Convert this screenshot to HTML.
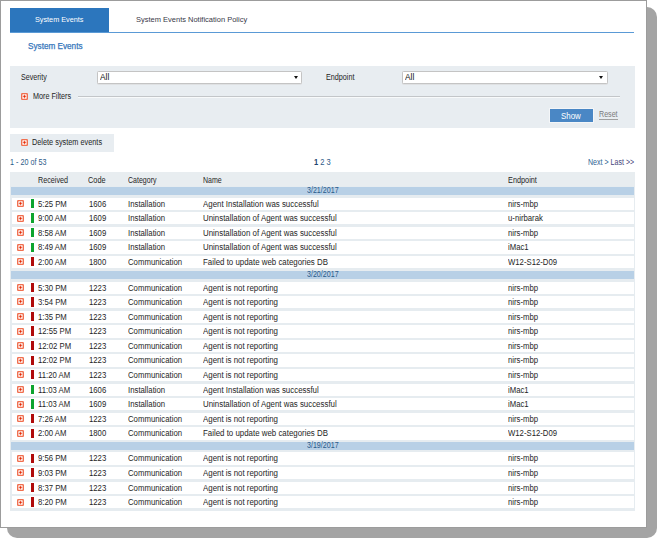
<!DOCTYPE html>
<html><head><meta charset="utf-8">
<style>
*{margin:0;padding:0;box-sizing:border-box}
html,body{width:665px;height:546px;background:#fff;overflow:hidden}
body{position:relative;font-family:"Liberation Sans",sans-serif;color:#222;}
.t{position:absolute;white-space:nowrap;line-height:20px;}
.shadow{position:absolute;left:7px;top:7px;width:650px;height:531px;background:#a4a4a4;border-radius:10px}
.panel{position:absolute;left:0;top:0;width:647px;height:528px;background:#fff;border:1px solid #9c9c9c}
.tab1{position:absolute;left:10px;top:8px;width:99px;height:24px;background:#2c76bd}
.tabline{position:absolute;left:10px;top:32px;width:624px;height:1px;background:#5a9ad6}
.filt{position:absolute;left:10px;top:65.5px;width:625px;height:62.1px;background:#e8edf1}
.sel{position:absolute;height:13.2px;background:#fff;border:1px solid #c4c4c4;border-radius:1.5px;box-shadow:0 0.6px 0 #d6d6d6}
.sel b{position:absolute;right:3.5px;top:3.8px;width:0;height:0;border-left:2.4px solid transparent;border-right:2.4px solid transparent;border-top:3.8px solid #111}
.ic{position:absolute;width:7px;height:7px;display:block}
.sep{position:absolute;left:78px;top:96.3px;width:542px;height:1px;background:#c3c6c9;box-shadow:0 1px 0 #f8fafb}
.show{position:absolute;left:549.5px;top:108.8px;width:43.5px;height:13px;background:#4a87c5;box-shadow:0 0 0 1px #f4f6f8}
.uline{position:absolute;left:599.2px;top:118.6px;width:18.6px;height:0.8px;background:#a0a0a0}
.del{position:absolute;left:10px;top:133.7px;width:103.8px;height:17.9px;background:#e8edf1}
.thead{position:absolute;left:10px;top:172px;width:625px;height:15px;background:#e8edf0}
.tbl{position:absolute;left:10.3px;top:186px;width:624.7px;height:324.7px;background:#e6ecf0}
.drow{position:absolute;left:11px;width:623px;height:8.1px;background:#b8d0e6}
.row{position:absolute;left:11.7px;width:622.3px;height:12.3px;background:#fff}
.bar{position:absolute;left:30.8px;width:2.8px;height:9.3px}
.bar.g{background:#0ca42e}
.bar.r{background:#b00a0a}
</style></head><body>
<div class="shadow"></div>
<div class="panel"></div>
<div class="tab1"></div>
<div class="tabline"></div>
<div class="filt"></div>
<div class="sel" style="left:97px;top:70.9px;width:205px"><b></b></div>
<div class="sel" style="left:402.3px;top:70.9px;width:205.5px"><b></b></div>
<svg class="ic" style="left:21px;top:93px" viewBox="0 0 14 14"><rect x="0" y="0" width="14" height="14" rx="2.5" fill="#f07050"/><rect x="2.7" y="2.6" width="8.6" height="8.8" rx="1" fill="#fff"/><rect x="6.2" y="2" width="1.6" height="10" fill="#f8b4a2"/><rect x="2" y="6.2" width="10" height="1.6" fill="#f8b4a2"/><circle cx="7" cy="7" r="2.3" fill="#e42805"/></svg>
<div class="sep"></div>
<div class="show"></div>
<div class="uline"></div>
<div class="del"></div>
<svg class="ic" style="left:21px;top:139px" viewBox="0 0 14 14"><rect x="0" y="0" width="14" height="14" rx="2.5" fill="#f07050"/><rect x="2.7" y="2.6" width="8.6" height="8.8" rx="1" fill="#fff"/><rect x="6.2" y="2" width="1.6" height="10" fill="#f8b4a2"/><rect x="2" y="6.2" width="10" height="1.6" fill="#f8b4a2"/><circle cx="7" cy="7" r="2.3" fill="#e42805"/></svg>
<div class="thead"></div>
<div class="tbl"></div>
<div class="t tb" style="left:35.48px;top:10.13px;font-size:8.0px;color:#fff;transform:scaleX(0.9067);transform-origin:0 0;">System Events</div>
<div class="t tb" style="left:135.77px;top:10.23px;font-size:8.0px;color:#383848;transform:scaleX(0.9363);transform-origin:0 0;">System Events Notification Policy</div>
<div class="t " style="left:28.34px;top:35.62px;font-size:8.6px;color:#3576bb;transform:scaleX(0.9511);transform-origin:0 0;-webkit-text-stroke:0.25px #3576bb;">System Events</div>
<div class="t " style="left:20.59px;top:67.29px;font-size:8.4px;color:#1e1e1e;transform:scaleX(0.8513);transform-origin:0 0;">Severity</div>
<div class="t " style="left:99.78px;top:66.99px;font-size:8.4px;color:#111;transform:scaleX(0.9921);transform-origin:0 0;">All</div>
<div class="t " style="left:326.21px;top:67.09px;font-size:8.4px;color:#1e1e1e;transform:scaleX(0.8605);transform-origin:0 0;">Endpoint</div>
<div class="t " style="left:404.98px;top:66.99px;font-size:8.4px;color:#111;transform:scaleX(0.9921);transform-origin:0 0;">All</div>
<div class="t " style="left:32.91px;top:85.79px;font-size:8.4px;color:#1e1e1e;transform:scaleX(0.8606);transform-origin:0 0;">More Filters</div>
<div class="t " style="left:560.85px;top:105.92px;font-size:8.6px;color:#fff;transform:scaleX(0.9210);transform-origin:0 0;">Show</div>
<div class="t " style="left:598.62px;top:105.36px;font-size:8.2px;color:#7a7a7a;transform:scaleX(0.8697);transform-origin:0 0;">Reset</div>
<div class="t " style="left:32.30px;top:132.49px;font-size:8.4px;color:#1e1e1e;transform:scaleX(0.8750);transform-origin:0 0;">Delete system events</div>
<div class="t " style="left:10.20px;top:151.59px;font-size:8.4px;color:#2e5b88;transform:scaleX(0.8600);transform-origin:0 0;">1 - 20 of 53</div>
<div class="t " style="left:37.71px;top:170.19px;font-size:8.4px;color:#1e1e1e;transform:scaleX(0.8613);transform-origin:0 0;">Received</div>
<div class="t " style="left:88.43px;top:170.19px;font-size:8.4px;color:#1e1e1e;transform:scaleX(0.8763);transform-origin:0 0;">Code</div>
<div class="t " style="left:127.65px;top:170.19px;font-size:8.4px;color:#1e1e1e;transform:scaleX(0.8380);transform-origin:0 0;">Category</div>
<div class="t " style="left:202.62px;top:170.19px;font-size:8.4px;color:#1e1e1e;transform:scaleX(0.8383);transform-origin:0 0;">Name</div>
<div class="t " style="left:507.80px;top:170.19px;font-size:8.4px;color:#1e1e1e;transform:scaleX(0.8728);transform-origin:0 0;">Endpoint</div>
<div class="t" style="left:314.2px;top:151.69px;font-size:8.4px;color:#2e5b88;transform:scaleX(0.9);transform-origin:0 0"><b style="color:#1f4470">1</b> 2 3</div>
<div class="t" style="left:587.5px;top:151.69px;font-size:8.4px;color:#2e5f92;transform:scaleX(0.845);transform-origin:0 0">Next &gt; <span style="color:#45457a">Last &gt;&gt;</span></div>
<div class="drow" style="top:187.00px"></div>
<div class="t " style="left:306.53px;top:180.86px;font-size:8.2px;color:#2a5a8a;transform:scaleX(0.8671);transform-origin:0 0;">3/21/2017</div>
<div class="row" style="top:197.60px"></div>
<svg class="ic" style="left:17px;top:200px" viewBox="0 0 14 14"><rect x="0" y="0" width="14" height="14" rx="2.5" fill="#f07050"/><rect x="2.7" y="2.6" width="8.6" height="8.8" rx="1" fill="#fff"/><rect x="6.2" y="2" width="1.6" height="10" fill="#f8b4a2"/><rect x="2" y="6.2" width="10" height="1.6" fill="#f8b4a2"/><circle cx="7" cy="7" r="2.3" fill="#e42805"/></svg>
<i class="bar g" style="top:198.80px"></i>
<div class="t" style="left:37.89px;top:193.65px;font-size:8.5px;color:#1e1e1e;transform:scaleX(0.91);transform-origin:0 0">5:25 PM</div>
<div class="t" style="left:88.91px;top:193.65px;font-size:8.5px;color:#1e1e1e;transform:scaleX(0.91);transform-origin:0 0">1606</div>
<div class="t" style="left:127.68px;top:193.65px;font-size:8.5px;color:#1e1e1e;transform:scaleX(0.915);transform-origin:0 0">Installation</div>
<div class="t" style="left:203.28px;top:193.65px;font-size:8.5px;color:#1e1e1e;transform:scaleX(0.928);transform-origin:0 0">Agent Installation was successful</div>
<div class="t" style="left:507.99px;top:193.65px;font-size:8.5px;color:#1e1e1e;transform:scaleX(0.91);transform-origin:0 0">nirs-mbp</div>
<div class="row" style="top:212.18px"></div>
<svg class="ic" style="left:17px;top:215px" viewBox="0 0 14 14"><rect x="0" y="0" width="14" height="14" rx="2.5" fill="#f07050"/><rect x="2.7" y="2.6" width="8.6" height="8.8" rx="1" fill="#fff"/><rect x="6.2" y="2" width="1.6" height="10" fill="#f8b4a2"/><rect x="2" y="6.2" width="10" height="1.6" fill="#f8b4a2"/><circle cx="7" cy="7" r="2.3" fill="#e42805"/></svg>
<i class="bar g" style="top:213.38px"></i>
<div class="t" style="left:37.84px;top:208.23px;font-size:8.5px;color:#1e1e1e;transform:scaleX(0.91);transform-origin:0 0">9:00 AM</div>
<div class="t" style="left:88.91px;top:208.23px;font-size:8.5px;color:#1e1e1e;transform:scaleX(0.91);transform-origin:0 0">1609</div>
<div class="t" style="left:127.68px;top:208.23px;font-size:8.5px;color:#1e1e1e;transform:scaleX(0.915);transform-origin:0 0">Installation</div>
<div class="t" style="left:202.70px;top:208.23px;font-size:8.5px;color:#1e1e1e;transform:scaleX(0.928);transform-origin:0 0">Uninstallation of Agent was successful</div>
<div class="t" style="left:508.00px;top:208.23px;font-size:8.5px;color:#1e1e1e;transform:scaleX(0.91);transform-origin:0 0">u-nirbarak</div>
<div class="row" style="top:226.76px"></div>
<svg class="ic" style="left:17px;top:229px" viewBox="0 0 14 14"><rect x="0" y="0" width="14" height="14" rx="2.5" fill="#f07050"/><rect x="2.7" y="2.6" width="8.6" height="8.8" rx="1" fill="#fff"/><rect x="6.2" y="2" width="1.6" height="10" fill="#f8b4a2"/><rect x="2" y="6.2" width="10" height="1.6" fill="#f8b4a2"/><circle cx="7" cy="7" r="2.3" fill="#e42805"/></svg>
<i class="bar g" style="top:227.96px"></i>
<div class="t" style="left:37.88px;top:222.81px;font-size:8.5px;color:#1e1e1e;transform:scaleX(0.91);transform-origin:0 0">8:58 AM</div>
<div class="t" style="left:88.91px;top:222.81px;font-size:8.5px;color:#1e1e1e;transform:scaleX(0.91);transform-origin:0 0">1609</div>
<div class="t" style="left:127.68px;top:222.81px;font-size:8.5px;color:#1e1e1e;transform:scaleX(0.915);transform-origin:0 0">Installation</div>
<div class="t" style="left:202.70px;top:222.81px;font-size:8.5px;color:#1e1e1e;transform:scaleX(0.928);transform-origin:0 0">Uninstallation of Agent was successful</div>
<div class="t" style="left:507.99px;top:222.81px;font-size:8.5px;color:#1e1e1e;transform:scaleX(0.91);transform-origin:0 0">nirs-mbp</div>
<div class="row" style="top:241.34px"></div>
<svg class="ic" style="left:17px;top:244px" viewBox="0 0 14 14"><rect x="0" y="0" width="14" height="14" rx="2.5" fill="#f07050"/><rect x="2.7" y="2.6" width="8.6" height="8.8" rx="1" fill="#fff"/><rect x="6.2" y="2" width="1.6" height="10" fill="#f8b4a2"/><rect x="2" y="6.2" width="10" height="1.6" fill="#f8b4a2"/><circle cx="7" cy="7" r="2.3" fill="#e42805"/></svg>
<i class="bar g" style="top:242.54px"></i>
<div class="t" style="left:37.88px;top:237.39px;font-size:8.5px;color:#1e1e1e;transform:scaleX(0.91);transform-origin:0 0">8:49 AM</div>
<div class="t" style="left:88.91px;top:237.39px;font-size:8.5px;color:#1e1e1e;transform:scaleX(0.91);transform-origin:0 0">1609</div>
<div class="t" style="left:127.68px;top:237.39px;font-size:8.5px;color:#1e1e1e;transform:scaleX(0.915);transform-origin:0 0">Installation</div>
<div class="t" style="left:202.70px;top:237.39px;font-size:8.5px;color:#1e1e1e;transform:scaleX(0.928);transform-origin:0 0">Uninstallation of Agent was successful</div>
<div class="t" style="left:507.99px;top:237.39px;font-size:8.5px;color:#1e1e1e;transform:scaleX(0.91);transform-origin:0 0">iMac1</div>
<div class="row" style="top:255.92px"></div>
<svg class="ic" style="left:17px;top:258px" viewBox="0 0 14 14"><rect x="0" y="0" width="14" height="14" rx="2.5" fill="#f07050"/><rect x="2.7" y="2.6" width="8.6" height="8.8" rx="1" fill="#fff"/><rect x="6.2" y="2" width="1.6" height="10" fill="#f8b4a2"/><rect x="2" y="6.2" width="10" height="1.6" fill="#f8b4a2"/><circle cx="7" cy="7" r="2.3" fill="#e42805"/></svg>
<i class="bar r" style="top:257.12px"></i>
<div class="t" style="left:37.81px;top:251.97px;font-size:8.5px;color:#1e1e1e;transform:scaleX(0.91);transform-origin:0 0">2:00 AM</div>
<div class="t" style="left:88.91px;top:251.97px;font-size:8.5px;color:#1e1e1e;transform:scaleX(0.91);transform-origin:0 0">1800</div>
<div class="t" style="left:128.01px;top:251.97px;font-size:8.5px;color:#1e1e1e;transform:scaleX(0.915);transform-origin:0 0">Communication</div>
<div class="t" style="left:202.65px;top:251.97px;font-size:8.5px;color:#1e1e1e;transform:scaleX(0.928);transform-origin:0 0">Failed to update web categories DB</div>
<div class="t" style="left:508.47px;top:251.97px;font-size:8.5px;color:#1e1e1e;transform:scaleX(0.91);transform-origin:0 0">W12-S12-D09</div>
<div class="drow" style="top:270.80px"></div>
<div class="t " style="left:306.53px;top:264.66px;font-size:8.2px;color:#2a5a8a;transform:scaleX(0.8671);transform-origin:0 0;">3/20/2017</div>
<div class="row" style="top:281.50px"></div>
<svg class="ic" style="left:17px;top:284px" viewBox="0 0 14 14"><rect x="0" y="0" width="14" height="14" rx="2.5" fill="#f07050"/><rect x="2.7" y="2.6" width="8.6" height="8.8" rx="1" fill="#fff"/><rect x="6.2" y="2" width="1.6" height="10" fill="#f8b4a2"/><rect x="2" y="6.2" width="10" height="1.6" fill="#f8b4a2"/><circle cx="7" cy="7" r="2.3" fill="#e42805"/></svg>
<i class="bar r" style="top:282.70px"></i>
<div class="t" style="left:37.89px;top:277.55px;font-size:8.5px;color:#1e1e1e;transform:scaleX(0.91);transform-origin:0 0">5:30 PM</div>
<div class="t" style="left:88.91px;top:277.55px;font-size:8.5px;color:#1e1e1e;transform:scaleX(0.91);transform-origin:0 0">1223</div>
<div class="t" style="left:128.01px;top:277.55px;font-size:8.5px;color:#1e1e1e;transform:scaleX(0.915);transform-origin:0 0">Communication</div>
<div class="t" style="left:203.28px;top:277.55px;font-size:8.5px;color:#1e1e1e;transform:scaleX(0.928);transform-origin:0 0">Agent is not reporting</div>
<div class="t" style="left:507.99px;top:277.55px;font-size:8.5px;color:#1e1e1e;transform:scaleX(0.91);transform-origin:0 0">nirs-mbp</div>
<div class="row" style="top:296.08px"></div>
<svg class="ic" style="left:17px;top:298px" viewBox="0 0 14 14"><rect x="0" y="0" width="14" height="14" rx="2.5" fill="#f07050"/><rect x="2.7" y="2.6" width="8.6" height="8.8" rx="1" fill="#fff"/><rect x="6.2" y="2" width="1.6" height="10" fill="#f8b4a2"/><rect x="2" y="6.2" width="10" height="1.6" fill="#f8b4a2"/><circle cx="7" cy="7" r="2.3" fill="#e42805"/></svg>
<i class="bar r" style="top:297.28px"></i>
<div class="t" style="left:37.91px;top:292.13px;font-size:8.5px;color:#1e1e1e;transform:scaleX(0.91);transform-origin:0 0">3:54 PM</div>
<div class="t" style="left:88.91px;top:292.13px;font-size:8.5px;color:#1e1e1e;transform:scaleX(0.91);transform-origin:0 0">1223</div>
<div class="t" style="left:128.01px;top:292.13px;font-size:8.5px;color:#1e1e1e;transform:scaleX(0.915);transform-origin:0 0">Communication</div>
<div class="t" style="left:203.28px;top:292.13px;font-size:8.5px;color:#1e1e1e;transform:scaleX(0.928);transform-origin:0 0">Agent is not reporting</div>
<div class="t" style="left:507.99px;top:292.13px;font-size:8.5px;color:#1e1e1e;transform:scaleX(0.91);transform-origin:0 0">nirs-mbp</div>
<div class="row" style="top:310.66px"></div>
<svg class="ic" style="left:17px;top:313px" viewBox="0 0 14 14"><rect x="0" y="0" width="14" height="14" rx="2.5" fill="#f07050"/><rect x="2.7" y="2.6" width="8.6" height="8.8" rx="1" fill="#fff"/><rect x="6.2" y="2" width="1.6" height="10" fill="#f8b4a2"/><rect x="2" y="6.2" width="10" height="1.6" fill="#f8b4a2"/><circle cx="7" cy="7" r="2.3" fill="#e42805"/></svg>
<i class="bar r" style="top:311.86px"></i>
<div class="t" style="left:37.61px;top:306.71px;font-size:8.5px;color:#1e1e1e;transform:scaleX(0.91);transform-origin:0 0">1:35 PM</div>
<div class="t" style="left:88.91px;top:306.71px;font-size:8.5px;color:#1e1e1e;transform:scaleX(0.91);transform-origin:0 0">1223</div>
<div class="t" style="left:128.01px;top:306.71px;font-size:8.5px;color:#1e1e1e;transform:scaleX(0.915);transform-origin:0 0">Communication</div>
<div class="t" style="left:203.28px;top:306.71px;font-size:8.5px;color:#1e1e1e;transform:scaleX(0.928);transform-origin:0 0">Agent is not reporting</div>
<div class="t" style="left:507.99px;top:306.71px;font-size:8.5px;color:#1e1e1e;transform:scaleX(0.91);transform-origin:0 0">nirs-mbp</div>
<div class="row" style="top:325.24px"></div>
<svg class="ic" style="left:17px;top:328px" viewBox="0 0 14 14"><rect x="0" y="0" width="14" height="14" rx="2.5" fill="#f07050"/><rect x="2.7" y="2.6" width="8.6" height="8.8" rx="1" fill="#fff"/><rect x="6.2" y="2" width="1.6" height="10" fill="#f8b4a2"/><rect x="2" y="6.2" width="10" height="1.6" fill="#f8b4a2"/><circle cx="7" cy="7" r="2.3" fill="#e42805"/></svg>
<i class="bar r" style="top:326.44px"></i>
<div class="t" style="left:37.61px;top:321.29px;font-size:8.5px;color:#1e1e1e;transform:scaleX(0.91);transform-origin:0 0">12:55 PM</div>
<div class="t" style="left:88.91px;top:321.29px;font-size:8.5px;color:#1e1e1e;transform:scaleX(0.91);transform-origin:0 0">1223</div>
<div class="t" style="left:128.01px;top:321.29px;font-size:8.5px;color:#1e1e1e;transform:scaleX(0.915);transform-origin:0 0">Communication</div>
<div class="t" style="left:203.28px;top:321.29px;font-size:8.5px;color:#1e1e1e;transform:scaleX(0.928);transform-origin:0 0">Agent is not reporting</div>
<div class="t" style="left:507.99px;top:321.29px;font-size:8.5px;color:#1e1e1e;transform:scaleX(0.91);transform-origin:0 0">nirs-mbp</div>
<div class="row" style="top:339.82px"></div>
<svg class="ic" style="left:17px;top:342px" viewBox="0 0 14 14"><rect x="0" y="0" width="14" height="14" rx="2.5" fill="#f07050"/><rect x="2.7" y="2.6" width="8.6" height="8.8" rx="1" fill="#fff"/><rect x="6.2" y="2" width="1.6" height="10" fill="#f8b4a2"/><rect x="2" y="6.2" width="10" height="1.6" fill="#f8b4a2"/><circle cx="7" cy="7" r="2.3" fill="#e42805"/></svg>
<i class="bar r" style="top:341.02px"></i>
<div class="t" style="left:37.61px;top:335.87px;font-size:8.5px;color:#1e1e1e;transform:scaleX(0.91);transform-origin:0 0">12:02 PM</div>
<div class="t" style="left:88.91px;top:335.87px;font-size:8.5px;color:#1e1e1e;transform:scaleX(0.91);transform-origin:0 0">1223</div>
<div class="t" style="left:128.01px;top:335.87px;font-size:8.5px;color:#1e1e1e;transform:scaleX(0.915);transform-origin:0 0">Communication</div>
<div class="t" style="left:203.28px;top:335.87px;font-size:8.5px;color:#1e1e1e;transform:scaleX(0.928);transform-origin:0 0">Agent is not reporting</div>
<div class="t" style="left:507.99px;top:335.87px;font-size:8.5px;color:#1e1e1e;transform:scaleX(0.91);transform-origin:0 0">nirs-mbp</div>
<div class="row" style="top:354.40px"></div>
<svg class="ic" style="left:17px;top:357px" viewBox="0 0 14 14"><rect x="0" y="0" width="14" height="14" rx="2.5" fill="#f07050"/><rect x="2.7" y="2.6" width="8.6" height="8.8" rx="1" fill="#fff"/><rect x="6.2" y="2" width="1.6" height="10" fill="#f8b4a2"/><rect x="2" y="6.2" width="10" height="1.6" fill="#f8b4a2"/><circle cx="7" cy="7" r="2.3" fill="#e42805"/></svg>
<i class="bar r" style="top:355.60px"></i>
<div class="t" style="left:37.61px;top:350.45px;font-size:8.5px;color:#1e1e1e;transform:scaleX(0.91);transform-origin:0 0">12:02 PM</div>
<div class="t" style="left:88.91px;top:350.45px;font-size:8.5px;color:#1e1e1e;transform:scaleX(0.91);transform-origin:0 0">1223</div>
<div class="t" style="left:128.01px;top:350.45px;font-size:8.5px;color:#1e1e1e;transform:scaleX(0.915);transform-origin:0 0">Communication</div>
<div class="t" style="left:203.28px;top:350.45px;font-size:8.5px;color:#1e1e1e;transform:scaleX(0.928);transform-origin:0 0">Agent is not reporting</div>
<div class="t" style="left:507.99px;top:350.45px;font-size:8.5px;color:#1e1e1e;transform:scaleX(0.91);transform-origin:0 0">nirs-mbp</div>
<div class="row" style="top:368.98px"></div>
<svg class="ic" style="left:17px;top:371px" viewBox="0 0 14 14"><rect x="0" y="0" width="14" height="14" rx="2.5" fill="#f07050"/><rect x="2.7" y="2.6" width="8.6" height="8.8" rx="1" fill="#fff"/><rect x="6.2" y="2" width="1.6" height="10" fill="#f8b4a2"/><rect x="2" y="6.2" width="10" height="1.6" fill="#f8b4a2"/><circle cx="7" cy="7" r="2.3" fill="#e42805"/></svg>
<i class="bar r" style="top:370.18px"></i>
<div class="t" style="left:37.61px;top:365.03px;font-size:8.5px;color:#1e1e1e;transform:scaleX(0.91);transform-origin:0 0">11:20 AM</div>
<div class="t" style="left:88.91px;top:365.03px;font-size:8.5px;color:#1e1e1e;transform:scaleX(0.91);transform-origin:0 0">1223</div>
<div class="t" style="left:128.01px;top:365.03px;font-size:8.5px;color:#1e1e1e;transform:scaleX(0.915);transform-origin:0 0">Communication</div>
<div class="t" style="left:203.28px;top:365.03px;font-size:8.5px;color:#1e1e1e;transform:scaleX(0.928);transform-origin:0 0">Agent is not reporting</div>
<div class="t" style="left:507.99px;top:365.03px;font-size:8.5px;color:#1e1e1e;transform:scaleX(0.91);transform-origin:0 0">nirs-mbp</div>
<div class="row" style="top:383.56px"></div>
<svg class="ic" style="left:17px;top:386px" viewBox="0 0 14 14"><rect x="0" y="0" width="14" height="14" rx="2.5" fill="#f07050"/><rect x="2.7" y="2.6" width="8.6" height="8.8" rx="1" fill="#fff"/><rect x="6.2" y="2" width="1.6" height="10" fill="#f8b4a2"/><rect x="2" y="6.2" width="10" height="1.6" fill="#f8b4a2"/><circle cx="7" cy="7" r="2.3" fill="#e42805"/></svg>
<i class="bar g" style="top:384.76px"></i>
<div class="t" style="left:37.61px;top:379.61px;font-size:8.5px;color:#1e1e1e;transform:scaleX(0.91);transform-origin:0 0">11:03 AM</div>
<div class="t" style="left:88.91px;top:379.61px;font-size:8.5px;color:#1e1e1e;transform:scaleX(0.91);transform-origin:0 0">1606</div>
<div class="t" style="left:127.68px;top:379.61px;font-size:8.5px;color:#1e1e1e;transform:scaleX(0.915);transform-origin:0 0">Installation</div>
<div class="t" style="left:203.28px;top:379.61px;font-size:8.5px;color:#1e1e1e;transform:scaleX(0.928);transform-origin:0 0">Agent Installation was successful</div>
<div class="t" style="left:507.99px;top:379.61px;font-size:8.5px;color:#1e1e1e;transform:scaleX(0.91);transform-origin:0 0">iMac1</div>
<div class="row" style="top:398.14px"></div>
<svg class="ic" style="left:17px;top:401px" viewBox="0 0 14 14"><rect x="0" y="0" width="14" height="14" rx="2.5" fill="#f07050"/><rect x="2.7" y="2.6" width="8.6" height="8.8" rx="1" fill="#fff"/><rect x="6.2" y="2" width="1.6" height="10" fill="#f8b4a2"/><rect x="2" y="6.2" width="10" height="1.6" fill="#f8b4a2"/><circle cx="7" cy="7" r="2.3" fill="#e42805"/></svg>
<i class="bar g" style="top:399.34px"></i>
<div class="t" style="left:37.61px;top:394.19px;font-size:8.5px;color:#1e1e1e;transform:scaleX(0.91);transform-origin:0 0">11:03 AM</div>
<div class="t" style="left:88.91px;top:394.19px;font-size:8.5px;color:#1e1e1e;transform:scaleX(0.91);transform-origin:0 0">1609</div>
<div class="t" style="left:127.68px;top:394.19px;font-size:8.5px;color:#1e1e1e;transform:scaleX(0.915);transform-origin:0 0">Installation</div>
<div class="t" style="left:202.70px;top:394.19px;font-size:8.5px;color:#1e1e1e;transform:scaleX(0.928);transform-origin:0 0">Uninstallation of Agent was successful</div>
<div class="t" style="left:507.99px;top:394.19px;font-size:8.5px;color:#1e1e1e;transform:scaleX(0.91);transform-origin:0 0">iMac1</div>
<div class="row" style="top:412.72px"></div>
<svg class="ic" style="left:17px;top:415px" viewBox="0 0 14 14"><rect x="0" y="0" width="14" height="14" rx="2.5" fill="#f07050"/><rect x="2.7" y="2.6" width="8.6" height="8.8" rx="1" fill="#fff"/><rect x="6.2" y="2" width="1.6" height="10" fill="#f8b4a2"/><rect x="2" y="6.2" width="10" height="1.6" fill="#f8b4a2"/><circle cx="7" cy="7" r="2.3" fill="#e42805"/></svg>
<i class="bar r" style="top:413.92px"></i>
<div class="t" style="left:37.81px;top:408.77px;font-size:8.5px;color:#1e1e1e;transform:scaleX(0.91);transform-origin:0 0">7:26 AM</div>
<div class="t" style="left:88.91px;top:408.77px;font-size:8.5px;color:#1e1e1e;transform:scaleX(0.91);transform-origin:0 0">1223</div>
<div class="t" style="left:128.01px;top:408.77px;font-size:8.5px;color:#1e1e1e;transform:scaleX(0.915);transform-origin:0 0">Communication</div>
<div class="t" style="left:203.28px;top:408.77px;font-size:8.5px;color:#1e1e1e;transform:scaleX(0.928);transform-origin:0 0">Agent is not reporting</div>
<div class="t" style="left:507.99px;top:408.77px;font-size:8.5px;color:#1e1e1e;transform:scaleX(0.91);transform-origin:0 0">nirs-mbp</div>
<div class="row" style="top:427.30px"></div>
<svg class="ic" style="left:17px;top:430px" viewBox="0 0 14 14"><rect x="0" y="0" width="14" height="14" rx="2.5" fill="#f07050"/><rect x="2.7" y="2.6" width="8.6" height="8.8" rx="1" fill="#fff"/><rect x="6.2" y="2" width="1.6" height="10" fill="#f8b4a2"/><rect x="2" y="6.2" width="10" height="1.6" fill="#f8b4a2"/><circle cx="7" cy="7" r="2.3" fill="#e42805"/></svg>
<i class="bar r" style="top:428.50px"></i>
<div class="t" style="left:37.81px;top:423.35px;font-size:8.5px;color:#1e1e1e;transform:scaleX(0.91);transform-origin:0 0">2:00 AM</div>
<div class="t" style="left:88.91px;top:423.35px;font-size:8.5px;color:#1e1e1e;transform:scaleX(0.91);transform-origin:0 0">1800</div>
<div class="t" style="left:128.01px;top:423.35px;font-size:8.5px;color:#1e1e1e;transform:scaleX(0.915);transform-origin:0 0">Communication</div>
<div class="t" style="left:202.65px;top:423.35px;font-size:8.5px;color:#1e1e1e;transform:scaleX(0.928);transform-origin:0 0">Failed to update web categories DB</div>
<div class="t" style="left:508.47px;top:423.35px;font-size:8.5px;color:#1e1e1e;transform:scaleX(0.91);transform-origin:0 0">W12-S12-D09</div>
<div class="drow" style="top:441.80px"></div>
<div class="t " style="left:306.53px;top:435.66px;font-size:8.2px;color:#2a5a8a;transform:scaleX(0.8671);transform-origin:0 0;">3/19/2017</div>
<div class="row" style="top:452.40px"></div>
<svg class="ic" style="left:17px;top:455px" viewBox="0 0 14 14"><rect x="0" y="0" width="14" height="14" rx="2.5" fill="#f07050"/><rect x="2.7" y="2.6" width="8.6" height="8.8" rx="1" fill="#fff"/><rect x="6.2" y="2" width="1.6" height="10" fill="#f8b4a2"/><rect x="2" y="6.2" width="10" height="1.6" fill="#f8b4a2"/><circle cx="7" cy="7" r="2.3" fill="#e42805"/></svg>
<i class="bar r" style="top:453.60px"></i>
<div class="t" style="left:37.84px;top:448.45px;font-size:8.5px;color:#1e1e1e;transform:scaleX(0.91);transform-origin:0 0">9:56 PM</div>
<div class="t" style="left:88.91px;top:448.45px;font-size:8.5px;color:#1e1e1e;transform:scaleX(0.91);transform-origin:0 0">1223</div>
<div class="t" style="left:128.01px;top:448.45px;font-size:8.5px;color:#1e1e1e;transform:scaleX(0.915);transform-origin:0 0">Communication</div>
<div class="t" style="left:203.28px;top:448.45px;font-size:8.5px;color:#1e1e1e;transform:scaleX(0.928);transform-origin:0 0">Agent is not reporting</div>
<div class="t" style="left:507.99px;top:448.45px;font-size:8.5px;color:#1e1e1e;transform:scaleX(0.91);transform-origin:0 0">nirs-mbp</div>
<div class="row" style="top:466.98px"></div>
<svg class="ic" style="left:17px;top:469px" viewBox="0 0 14 14"><rect x="0" y="0" width="14" height="14" rx="2.5" fill="#f07050"/><rect x="2.7" y="2.6" width="8.6" height="8.8" rx="1" fill="#fff"/><rect x="6.2" y="2" width="1.6" height="10" fill="#f8b4a2"/><rect x="2" y="6.2" width="10" height="1.6" fill="#f8b4a2"/><circle cx="7" cy="7" r="2.3" fill="#e42805"/></svg>
<i class="bar r" style="top:468.18px"></i>
<div class="t" style="left:37.84px;top:463.03px;font-size:8.5px;color:#1e1e1e;transform:scaleX(0.91);transform-origin:0 0">9:03 PM</div>
<div class="t" style="left:88.91px;top:463.03px;font-size:8.5px;color:#1e1e1e;transform:scaleX(0.91);transform-origin:0 0">1223</div>
<div class="t" style="left:128.01px;top:463.03px;font-size:8.5px;color:#1e1e1e;transform:scaleX(0.915);transform-origin:0 0">Communication</div>
<div class="t" style="left:203.28px;top:463.03px;font-size:8.5px;color:#1e1e1e;transform:scaleX(0.928);transform-origin:0 0">Agent is not reporting</div>
<div class="t" style="left:507.99px;top:463.03px;font-size:8.5px;color:#1e1e1e;transform:scaleX(0.91);transform-origin:0 0">nirs-mbp</div>
<div class="row" style="top:481.56px"></div>
<svg class="ic" style="left:17px;top:484px" viewBox="0 0 14 14"><rect x="0" y="0" width="14" height="14" rx="2.5" fill="#f07050"/><rect x="2.7" y="2.6" width="8.6" height="8.8" rx="1" fill="#fff"/><rect x="6.2" y="2" width="1.6" height="10" fill="#f8b4a2"/><rect x="2" y="6.2" width="10" height="1.6" fill="#f8b4a2"/><circle cx="7" cy="7" r="2.3" fill="#e42805"/></svg>
<i class="bar r" style="top:482.76px"></i>
<div class="t" style="left:37.88px;top:477.61px;font-size:8.5px;color:#1e1e1e;transform:scaleX(0.91);transform-origin:0 0">8:37 PM</div>
<div class="t" style="left:88.91px;top:477.61px;font-size:8.5px;color:#1e1e1e;transform:scaleX(0.91);transform-origin:0 0">1223</div>
<div class="t" style="left:128.01px;top:477.61px;font-size:8.5px;color:#1e1e1e;transform:scaleX(0.915);transform-origin:0 0">Communication</div>
<div class="t" style="left:203.28px;top:477.61px;font-size:8.5px;color:#1e1e1e;transform:scaleX(0.928);transform-origin:0 0">Agent is not reporting</div>
<div class="t" style="left:507.99px;top:477.61px;font-size:8.5px;color:#1e1e1e;transform:scaleX(0.91);transform-origin:0 0">nirs-mbp</div>
<div class="row" style="top:496.14px"></div>
<svg class="ic" style="left:17px;top:499px" viewBox="0 0 14 14"><rect x="0" y="0" width="14" height="14" rx="2.5" fill="#f07050"/><rect x="2.7" y="2.6" width="8.6" height="8.8" rx="1" fill="#fff"/><rect x="6.2" y="2" width="1.6" height="10" fill="#f8b4a2"/><rect x="2" y="6.2" width="10" height="1.6" fill="#f8b4a2"/><circle cx="7" cy="7" r="2.3" fill="#e42805"/></svg>
<i class="bar r" style="top:497.34px"></i>
<div class="t" style="left:37.88px;top:492.19px;font-size:8.5px;color:#1e1e1e;transform:scaleX(0.91);transform-origin:0 0">8:20 PM</div>
<div class="t" style="left:88.91px;top:492.19px;font-size:8.5px;color:#1e1e1e;transform:scaleX(0.91);transform-origin:0 0">1223</div>
<div class="t" style="left:128.01px;top:492.19px;font-size:8.5px;color:#1e1e1e;transform:scaleX(0.915);transform-origin:0 0">Communication</div>
<div class="t" style="left:203.28px;top:492.19px;font-size:8.5px;color:#1e1e1e;transform:scaleX(0.928);transform-origin:0 0">Agent is not reporting</div>
<div class="t" style="left:507.99px;top:492.19px;font-size:8.5px;color:#1e1e1e;transform:scaleX(0.91);transform-origin:0 0">nirs-mbp</div>
</body></html>
